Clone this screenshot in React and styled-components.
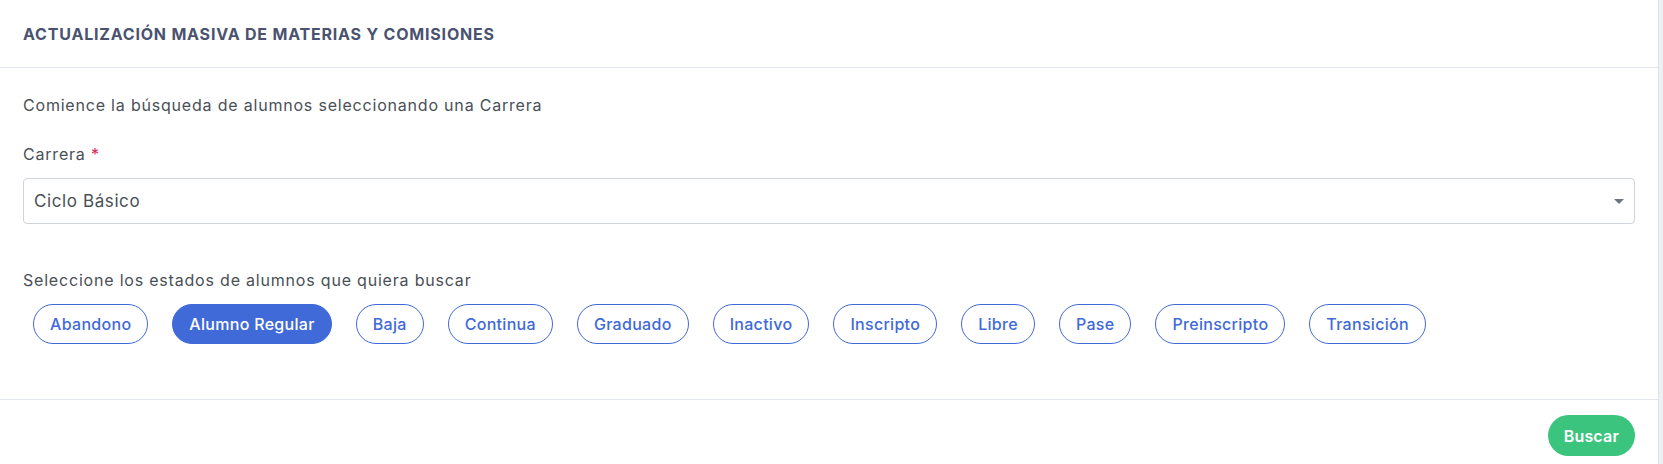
import React, { useState } from 'react';
import styled, { createGlobalStyle } from 'styled-components';

const GlobalStyle = createGlobalStyle`
  html, body {
    margin: 0;
    padding: 0;
    background: #eef0f4;
    font-family: 'Inter', 'Noto Sans', sans-serif;
  }
`;

const Card = styled.div`
  width: 1659px;
  height: 464px;
  background: #fff;
  border-right: 1px solid #dfe3ea;
  box-sizing: border-box;
  display: flex;
  flex-direction: column;
`;

const Header = styled.div`
  height: 68px;
  box-sizing: border-box;
  display: flex;
  align-items: center;
  padding: 0 23px;
  border-bottom: 1px solid #e3e7ee;
`;

const Title = styled.h5`
  margin: 0;
  font-size: 16px;
  font-weight: 700;
  letter-spacing: 0.8px;
  color: #4a5270;
  text-transform: uppercase;
`;

const Body = styled.div`
  padding: 26px 23px 55px;
  border-bottom: 1px solid #e3e7ee;
  display: flex;
  flex-direction: column;
`;

const Text = styled.p`
  margin: 0;
  font-size: 16px;
  line-height: 22px;
  letter-spacing: 0.8px;
  color: #495057;
`;

const Label = styled(Text)`
  margin-top: ${(p) => p.$top}px;
`;

const Required = styled.span`
  color: #d92550;
`;

const Select = styled.div`
  margin-top: 13px;
  height: 46px;
  box-sizing: border-box;
  border: 1px solid #ced4da;
  border-radius: 4px;
  display: flex;
  align-items: center;
  justify-content: space-between;
  padding: 0 10px 0 10px;
  font-size: 17px;
  letter-spacing: 0.6px;
  color: #495057;
`;

const Caret = styled.span`
  width: 0;
  height: 0;
  border-left: 5px solid transparent;
  border-right: 5px solid transparent;
  border-top: 5px solid #6c757d;
`;

const Chips = styled.div`
  margin-top: 13px;
  padding-left: 10px;
  display: flex;
  gap: 24px;
`;

const Chip = styled.button`
  height: 40px;
  padding: 0 16px;
  border-radius: 20px;
  border: 1px solid #3f6ad8;
  background: ${(p) => (p.$active ? '#3f6ad8' : '#fff')};
  color: ${(p) => (p.$active ? '#fff' : '#3f6ad8')};
  font-family: inherit;
  font-size: 16px;
  font-weight: 500;
  letter-spacing: 0.3px;
  cursor: pointer;
`;

const Footer = styled.div`
  flex: 1;
  display: flex;
  justify-content: flex-end;
  align-items: flex-start;
  padding: 15px 23px 0;
`;

const SearchButton = styled.button`
  height: 41px;
  padding: 0 16px;
  border: none;
  border-radius: 21px;
  background: #3ac47d;
  color: #fff;
  font-family: inherit;
  font-size: 16px;
  font-weight: 600;
  letter-spacing: 0.2px;
  cursor: pointer;
`;

const estados = [
  'Abandono',
  'Alumno Regular',
  'Baja',
  'Continua',
  'Graduado',
  'Inactivo',
  'Inscripto',
  'Libre',
  'Pase',
  'Preinscripto',
  'Transición',
];

export default function App() {
  const [selected, setSelected] = useState(['Alumno Regular']);

  const toggle = (e) =>
    setSelected((s) => (s.includes(e) ? s.filter((x) => x !== e) : [...s, e]));

  return (
    <>
      <GlobalStyle />
      <Card>
        <Header>
          <Title>Actualización masiva de materias y comisiones</Title>
        </Header>
        <Body>
          <Text>Comience la búsqueda de alumnos seleccionando una Carrera</Text>
          <Label $top={27}>
            Carrera <Required>*</Required>
          </Label>
          <Select>
            <span>Ciclo Básico</span>
            <Caret />
          </Select>
          <Label $top={45}>Seleccione los estados de alumnos que quiera buscar</Label>
          <Chips>
            {estados.map((e) => (
              <Chip key={e} $active={selected.includes(e)} onClick={() => toggle(e)}>
                {e}
              </Chip>
            ))}
          </Chips>
        </Body>
        <Footer>
          <SearchButton>Buscar</SearchButton>
        </Footer>
      </Card>
    </>
  );
}
